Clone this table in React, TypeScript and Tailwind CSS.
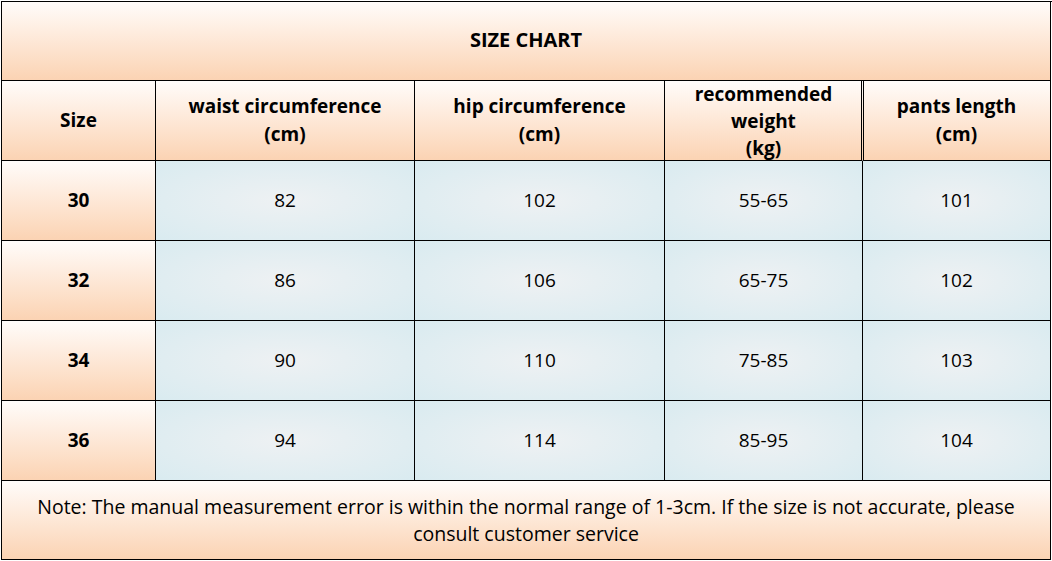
const HEAD = 'bg-linear-to-b from-[#fffcfa] to-[#fbd3b3]';
const BODY = 'bg-radial from-[#eef1f3] to-[#d9ebf0]';

const rows = [
  { size: '30', waist: '82', hip: '102', weight: '55-65', length: '101' },
  { size: '32', waist: '86', hip: '106', weight: '65-75', length: '102' },
  { size: '34', waist: '90', hip: '110', weight: '75-85', length: '103' },
  { size: '36', waist: '94', hip: '114', weight: '85-95', length: '104' },
];

export default function App() {
  return (
    <div
      className="h-[561px] w-[1052px] overflow-hidden bg-white pl-px pt-px text-black"
      style={{ fontFamily: '"Open Sans", "Noto Sans", "Noto Sans CJK SC", sans-serif' }}
    >
      <div className="grid grid-cols-[154px_259px_250px_198px_188px] grid-rows-[79px_80px_80px_80px_80px_80px_79px] border-l border-t border-black">
        {/* title */}
        <div className={`col-span-5 flex items-center justify-center border-b border-r border-black ${HEAD}`}>
          <span className="-mt-0.5 text-[20px] font-bold">SIZE CHART</span>
        </div>

        {/* header row */}
        <div className={`flex items-center justify-center border-b border-r border-black ${HEAD}`}>
          <span className="text-[19px] font-bold">Size</span>
        </div>
        <div className={`flex items-center justify-center border-b border-r border-black ${HEAD}`}>
          <span className="-mt-0.5 text-center text-[19px] leading-[28px] font-bold">
            waist circumference
            <br />
            (cm)
          </span>
        </div>
        <div className={`flex items-center justify-center border-b border-r border-black ${HEAD}`}>
          <span className="-mt-0.5 text-center text-[19px] leading-[28px] font-bold">
            hip circumference
            <br />
            (cm)
          </span>
        </div>
        <div
          className={`flex items-center justify-center overflow-hidden border-b border-r border-r-transparent border-black shadow-[inset_-1px_0_0_#000] ${HEAD}`}
        >
          <span className="mt-0.5 text-center text-[19px] leading-[27px] font-bold">
            recommended
            <br />
            weight
            <br />
            (kg)
          </span>
        </div>
        <div className={`flex items-center justify-center border-b border-r border-black shadow-[inset_1px_0_0_#000] ${HEAD}`}>
          <span className="-mt-0.5 text-center text-[19px] leading-[28px] font-bold">
            pants length
            <br />
            (cm)
          </span>
        </div>

        {/* data rows */}
        {rows.map((r) => (
          <div key={r.size} className="contents">
            <div className={`flex items-center justify-center border-b border-r border-black ${HEAD}`}>
              <span className="text-[19px] font-bold">{r.size}</span>
            </div>
            {[r.waist, r.hip, r.weight, r.length].map((v, i) => (
              <div key={i} className={`flex items-center justify-center border-b border-r border-black ${BODY}`}>
                <span className="text-[19px]">{v}</span>
              </div>
            ))}
          </div>
        ))}

        {/* note */}
        <div className={`col-span-5 flex items-center justify-center border-b border-r border-black px-4 ${HEAD}`}>
          <p className="text-center text-[19.5px] leading-[27px]">
            Note: The manual measurement error is within the normal range of 1-3cm. If the size is not accurate, please
            consult customer service
          </p>
        </div>
      </div>
    </div>
  );
}
